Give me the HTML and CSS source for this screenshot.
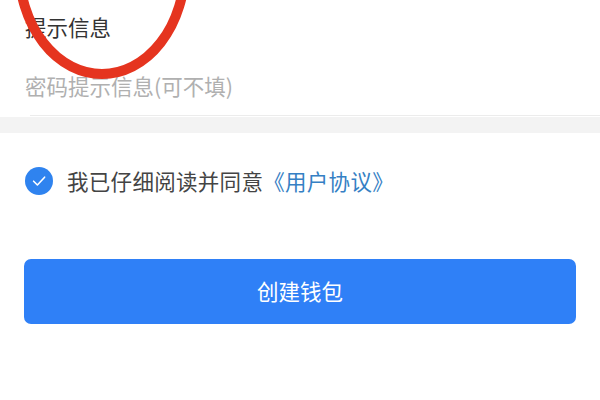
FILE: index.html
```html
<!DOCTYPE html>
<html lang="zh-CN">
<head>
<meta charset="utf-8">
<link rel="stylesheet" href="styles.css">
</head>
<body>
<div class="page">
  <section class="field">
    <div class="label">提示信息</div>
    <div class="placeholder">密码提示信息(可不填)</div>
  </section>
  <div class="divider"></div>
  <div class="band"></div>
  <div class="agree">
    <span class="check">
      <svg width="28" height="28" viewBox="0 0 28 28"><circle cx="14" cy="14" r="14" fill="#2f83ef"/><path d="M8.6 14.2 L12.4 18 L19.6 10.2" fill="none" stroke="#fff" stroke-width="1.6" stroke-linecap="round" stroke-linejoin="round"/></svg>
    </span>
    <span class="agree-text">我已仔细阅读并同意<span class="link">《用户协议》</span></span>
  </div>
  <button class="create">创建钱包</button>
  <svg class="mark" width="600" height="400" viewBox="0 0 600 400"><ellipse cx="102" cy="-33" rx="83" ry="107" fill="none" stroke="#e5341f" stroke-width="10"/></svg>
</div>
</body>
</html>
```
FILE: styles.css
```css
html, body {
  margin: 0;
  padding: 0;
  background: #fff;
}
.page {
  position: relative;
  width: 600px;
  height: 400px;
  overflow: hidden;
  font-family: "Noto Sans CJK SC", "Noto Sans", sans-serif;
}
.field {
  padding: 12px 0 0 25px;
}
.label {
  font-size: 21.5px;
  line-height: 30px;
  color: #333;
}
.placeholder {
  margin-top: 29px;
  font-size: 21.5px;
  line-height: 30px;
  color: #b0b0b0;
}
.divider {
  margin: 14px 0 0 30px;
  height: 1px;
  background: #ececec;
}
.band {
  margin-top: 1px;
  height: 16px;
  background: #f3f3f3;
}
.agree {
  display: flex;
  align-items: center;
  gap: 14px;
  margin-top: 34px;
  padding-left: 25px;
  height: 28px;
}
.check {
  display: flex;
  width: 28px;
  height: 28px;
}
.agree-text {
  font-size: 21.5px;
  line-height: 28px;
  color: #444;
  letter-spacing: 0.3px;
}
.link {
  color: #3580c4;
}
.create {
  display: block;
  margin: 64px 0 0 24px;
  width: 552px;
  height: 65px;
  border: none;
  border-radius: 7px;
  background: #2f80f7;
  color: #fff;
  font-family: "Noto Sans CJK SC", "Noto Sans", sans-serif;
  font-size: 21.5px;
  padding: 0 0 3px 0;
}
.mark {
  position: absolute;
  left: 0;
  top: 0;
  pointer-events: none;
}
```
